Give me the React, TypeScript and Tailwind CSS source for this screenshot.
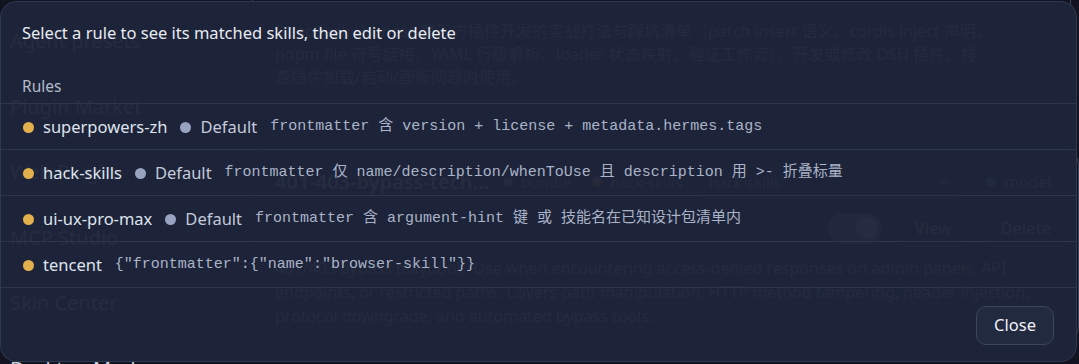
import React from "react";

type Rule = {
  name: string;
  isDefault: boolean;
  match: string;
};

const rules: Rule[] = [
  {
    name: "superpowers-zh",
    isDefault: true,
    match: "frontmatter 含 version + license + metadata.hermes.tags",
  },
  {
    name: "hack-skills",
    isDefault: true,
    match: "frontmatter 仅 name/description/whenToUse 且 description 用 >- 折叠标量",
  },
  {
    name: "ui-ux-pro-max",
    isDefault: true,
    match: "frontmatter 含 argument-hint 键 或 技能名在已知设计包清单内",
  },
  {
    name: "tencent",
    isDefault: false,
    match: '{"frontmatter":{"name":"browser-skill"}}',
  },
];

const navItems = ["Agent presets", "Plugin Market", "Web Plugin", "MCP Studio", "Skin Center", "Desktop Mode"];

function BackgroundPage() {
  return (
    <div className="flex h-full">
      {/* sidebar */}
      <aside className="flex w-[252px] shrink-0 flex-col gap-[38.5px] pl-[10px] pt-[27px] text-[20px] leading-[27px] text-[#c9d0de]">
        {navItems.map((item) => (
          <div key={item} className="whitespace-nowrap">
            {item}
          </div>
        ))}
      </aside>

      {/* main content */}
      <main className="flex flex-1 flex-col">
        <div className="mr-[8px] rounded-b-[14px] border border-t-0 border-[#3a4256] px-[22px] pb-[14px] pt-[20px] text-[16px] leading-[23px] text-[#aab2c3]">
          <div className="whitespace-nowrap">
            DeepSeek Harness 第三方插件开发的实战打法与踩坑清单（patch insert 语义、cordis inject 声明、
          </div>
          <div className="whitespace-nowrap">
            pnpm file 符号链接、YAML 行级解析、loader 状态映射、验证工作流）。开发或修改 DSH 插件、排
          </div>
          <div className="whitespace-nowrap">查插件加载/启动/面板问题时使用。</div>
        </div>

        <div className="mt-[46px] rounded-[14px] border border-[#3a4256] pl-[22px] pr-[8px] pt-[14px]">
          <div className="flex items-center gap-[14px]">
            <div className="text-[20px] font-semibold text-[#d5dbe6]">401-403-bypass-tech...</div>
            <div className="flex items-center gap-[8px] text-[15px] text-[#aab2c3]">
              <span className="h-[10px] w-[10px] rounded-full bg-[#8f9ab3]" />
              bundle
              <span className="ml-[14px] h-[10px] w-[10px] rounded-full bg-[#d59a5a]" />
              hack-skills
            </div>
            <div className="flex h-[34px] w-[268px] items-center justify-between rounded-[10px] border border-[#3a4256] px-[12px] text-[15px] text-[#aab2c3]">
              hack-skills
              <svg width="16" height="16" viewBox="0 0 24 24" fill="none" stroke="#aab2c3" strokeWidth="2">
                <path d="M6 9l6 6 6-6" />
              </svg>
            </div>
            <div className="ml-[8px] flex items-center gap-[8px] text-[16px] text-[#aab2c3]">
              <span className="h-[10px] w-[10px] rounded-full bg-[#4fae7a]" />
              model
            </div>
          </div>
          <div className="mt-[10px] flex items-center justify-end gap-[12px]">
            <div className="mr-[2px] flex h-[31px] w-[54px] items-center justify-end rounded-full bg-[#6a7aa0] px-[4px]">
              <span className="h-[22px] w-[22px] rounded-full bg-[#c9d0de]" />
            </div>
            <div className="flex h-[38px] w-[74px] items-center justify-center rounded-[10px] border border-[#3a4256] text-[16px] font-semibold text-[#aab2c3]">
              View
            </div>
            <div className="flex h-[38px] w-[88px] items-center justify-center rounded-[10px] border border-[#3a4256] text-[16px] font-semibold text-[#aab2c3]">
              Delete
            </div>
          </div>
          <div className="pb-[12px] pt-[9px] text-[16px] leading-[24px] text-[#aab2c3]">
            <div className="whitespace-nowrap">
              401/403 bypass playbook. Use when encountering access-denied responses on admin panels, API
            </div>
            <div className="whitespace-nowrap">
              endpoints, or restricted paths. Covers path manipulation, HTTP method tampering, header injection,
            </div>
            <div className="whitespace-nowrap">protocol downgrade, and automated bypass tools.</div>
          </div>
        </div>
      </main>
    </div>
  );
}

function RuleRow({ rule }: { rule: Rule }) {
  return (
    <div className="flex h-[46px] items-center gap-[13px] border-b border-[#2d364b] pl-[22px] pt-px">
      <div className="flex items-center gap-[9px]">
        <span className="h-[11px] w-[11px] rounded-full bg-[#e2b04d]" />
        <span className="text-[16.5px] text-[#dfe4ee]">{rule.name}</span>
      </div>
      {rule.isDefault && (
        <div className="flex items-center gap-[9px]">
          <span className="h-[11px] w-[11px] rounded-full bg-[#98a3c0]" />
          <span className="text-[16.5px] text-[#c3cadb]">Default</span>
        </div>
      )}
      <span className="whitespace-pre font-['Liberation_Mono','Noto_Sans_CJK_SC',monospace] text-[15px] text-[#aab4c8]">
        {rule.match}
      </span>
    </div>
  );
}

export default function App() {
  return (
    <div className="relative h-[364px] w-[1079px] overflow-hidden bg-[#111420] font-['Noto_Sans','Noto_Sans_CJK_SC',sans-serif]">
      <BackgroundPage />

      {/* rules dialog */}
      <div className="absolute left-0 top-px flex h-[361px] w-[1077px] flex-col rounded-[16px] border border-[#2e3850] bg-[#1e2439]/[0.96]">
        <div className="px-[21px] pt-[19px] text-[16.5px] leading-[24px] text-[#e8ebf2]">
          Select a rule to see its matched skills, then edit or delete
        </div>
        <div className="mt-[30px] px-[21px] pb-[6px] text-[15.5px] leading-[22px] text-[#b4bccb]">Rules</div>
        <div className="border-t border-[#2d364b]">
          {rules.map((r) => (
            <RuleRow key={r.name} rule={r} />
          ))}
        </div>
        <div className="flex justify-end pr-[22px] pt-[18px]">
          <button className="h-[39px] rounded-[10px] border border-[#3a4560] bg-[#222a3f] px-[17px] text-[16.5px] text-[#eef0f5]">
            Close
          </button>
        </div>
      </div>
    </div>
  );
}
